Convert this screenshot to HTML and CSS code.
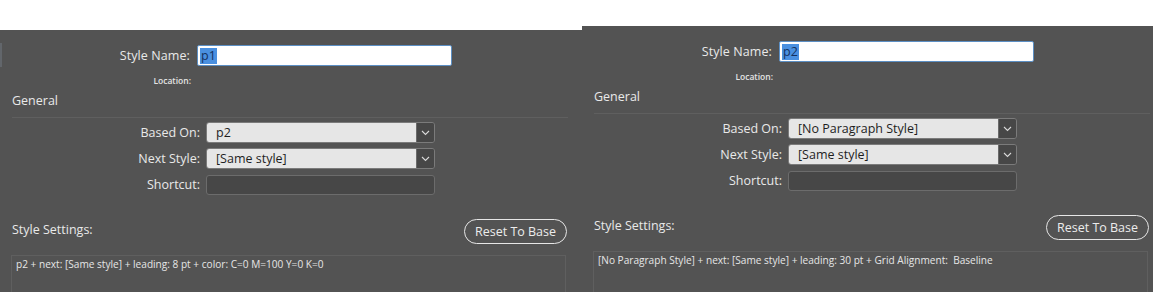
FILE: index.html
```html
<!DOCTYPE html>
<html lang="en">
<head>
<meta charset="utf-8">
<title>Paragraph Style Options</title>
<link rel="stylesheet" href="styles.css">
</head>
<body>
<div class="page">
  <section class="panel panel-left">
    <span class="edge-mark"></span>
    <div class="row-name">
      <label class="label-name">Style Name:</label>
      <div class="name-input"><span class="sel">p1</span></div>
    </div>
    <div class="row-location"><span class="label-location">Location:</span></div>
    <div class="section-title">General</div>
    <div class="divider"></div>
    <div class="field-row">
      <label class="label-field">Based On:</label>
      <div class="select"><span class="select-value">p2</span><span class="select-btn"><svg width="9" height="6" viewBox="0 0 9 6"><polyline points="1,1 4.5,4.5 8,1" fill="none" stroke="#d8d8d8" stroke-width="1.1"/></svg></span></div>
    </div>
    <div class="field-row">
      <label class="label-field">Next Style:</label>
      <div class="select"><span class="select-value">[Same style]</span><span class="select-btn"><svg width="9" height="6" viewBox="0 0 9 6"><polyline points="1,1 4.5,4.5 8,1" fill="none" stroke="#d8d8d8" stroke-width="1.1"/></svg></span></div>
    </div>
    <div class="field-row">
      <label class="label-field">Shortcut:</label>
      <div class="shortcut"></div>
    </div>
    <div class="settings-head">
      <span class="settings-title">Style Settings:</span>
      <button class="reset-btn">Reset To Base</button>
    </div>
    <div class="settings-box">p2 + next: [Same style] + leading: 8 pt + color: C=0 M=100 Y=0 K=0</div>
  </section>
  <section class="panel panel-right">
    <div class="row-name">
      <label class="label-name">Style Name:</label>
      <div class="name-input"><span class="sel">p2</span></div>
    </div>
    <div class="row-location"><span class="label-location">Location:</span></div>
    <div class="section-title">General</div>
    <div class="divider"></div>
    <div class="field-row">
      <label class="label-field">Based On:</label>
      <div class="select"><span class="select-value">[No Paragraph Style]</span><span class="select-btn"><svg width="9" height="6" viewBox="0 0 9 6"><polyline points="1,1 4.5,4.5 8,1" fill="none" stroke="#d8d8d8" stroke-width="1.1"/></svg></span></div>
    </div>
    <div class="field-row">
      <label class="label-field">Next Style:</label>
      <div class="select"><span class="select-value">[Same style]</span><span class="select-btn"><svg width="9" height="6" viewBox="0 0 9 6"><polyline points="1,1 4.5,4.5 8,1" fill="none" stroke="#d8d8d8" stroke-width="1.1"/></svg></span></div>
    </div>
    <div class="field-row">
      <label class="label-field">Shortcut:</label>
      <div class="shortcut"></div>
    </div>
    <div class="settings-head">
      <span class="settings-title">Style Settings:</span>
      <button class="reset-btn">Reset To Base</button>
    </div>
    <div class="settings-box">[No Paragraph Style] + next: [Same style] + leading: 30 pt + Grid Alignment:&nbsp; Baseline</div>
  </section>
</div>
</body>
</html>
```

FILE: styles.css
```css
* { box-sizing: border-box; }

html, body {
  margin: 0;
  padding: 0;
  background: #ffffff;
}

.page {
  display: flex;
  align-items: flex-start;
  width: 1153px;
  height: 292px;
  overflow: hidden;
  font-family: "Open Sans", "Noto Sans", "Liberation Sans", sans-serif;
  color: #e9e9e9;
}

.panel {
  flex: none;
  position: relative;
  width: 582px;
  height: 300px;
  background: #535353;
  padding-top: 15px;
  overflow: hidden;
}

.panel-left { margin-top: 30px; }
.panel-right { margin-top: 26px; width: 580px; }

.edge-mark {
  position: absolute;
  left: 0;
  top: 13px;
  width: 2px;
  height: 24px;
  background: #62666b;
}

.row-name {
  display: flex;
  align-items: center;
  height: 21px;
}

.label-name {
  width: 190px;
  text-align: right;
  font-size: 12.5px;
  letter-spacing: 0.1px;
}

.name-input {
  margin-left: 7px;
  width: 255px;
  height: 21px;
  background: #ffffff;
  border: 1.5px solid #5c8fc4;
  border-radius: 2px;
  display: flex;
  align-items: center;
  padding-left: 2px;
}

.sel {
  background: #4a90e0;
  color: #14305e;
  font-size: 12.5px;
  line-height: 16px;
  padding: 0 1px;
}

.row-location {
  margin-top: 8px;
  height: 12px;
  display: flex;
  align-items: center;
}

.label-location {
  width: 191px;
  text-align: right;
  font-size: 8.5px;
  font-weight: 600;
  color: #e4e4e4;
}

.section-title {
  margin-top: 7px;
  margin-left: 12px;
  height: 16px;
  line-height: 16px;
  font-size: 12.5px;
}

.divider {
  margin-top: 8px;
  margin-left: 12px;
  width: 556px;
  height: 1px;
  background: #5f5f5f;
}

.field-row {
  display: flex;
  align-items: center;
  height: 21px;
  margin-top: 5px;
}

.divider + .field-row { margin-top: 4px; }

.label-field {
  width: 200px;
  text-align: right;
  font-size: 12.5px;
}

.select {
  margin-left: 6px;
  width: 229px;
  height: 21px;
  display: flex;
  border: 1px solid #7b7b7b;
  border-radius: 3px;
  overflow: hidden;
}

.select-value {
  flex: 1;
  background: #e6e6e6;
  color: #1e1e1e;
  font-size: 12.5px;
  line-height: 19px;
  padding-left: 9px;
}

.select-btn {
  width: 18px;
  background: #474747;
  border-left: 1px solid #6a6a6a;
  display: flex;
  align-items: center;
  justify-content: center;
}

.shortcut {
  margin-left: 6px;
  width: 229px;
  height: 20px;
  background: #474747;
  border: 1px solid #6c6c6c;
  border-radius: 3px;
}

.settings-head {
  margin-top: 24px;
  display: flex;
  align-items: center;
  height: 25px;
  padding-left: 12px;
}

.settings-title {
  width: 452px;
  font-size: 12.5px;
  padding-bottom: 4px;
}

.reset-btn {
  width: 103px;
  height: 25px;
  background: transparent;
  border: 1px solid #e6e6e6;
  border-radius: 13px;
  color: #ececec;
  font-family: "Open Sans", "Noto Sans", "Liberation Sans", sans-serif;
  font-size: 12.5px;
  padding: 0;
}

.settings-box {
  margin-top: 11px;
  margin-left: 11px;
  width: 555px;
  height: 80px;
  border: 1px solid #5f5f5f;
  padding: 1px 4px;
  font-size: 10.1px;
  line-height: 14px;
  color: #e6e6e6;
}
```
